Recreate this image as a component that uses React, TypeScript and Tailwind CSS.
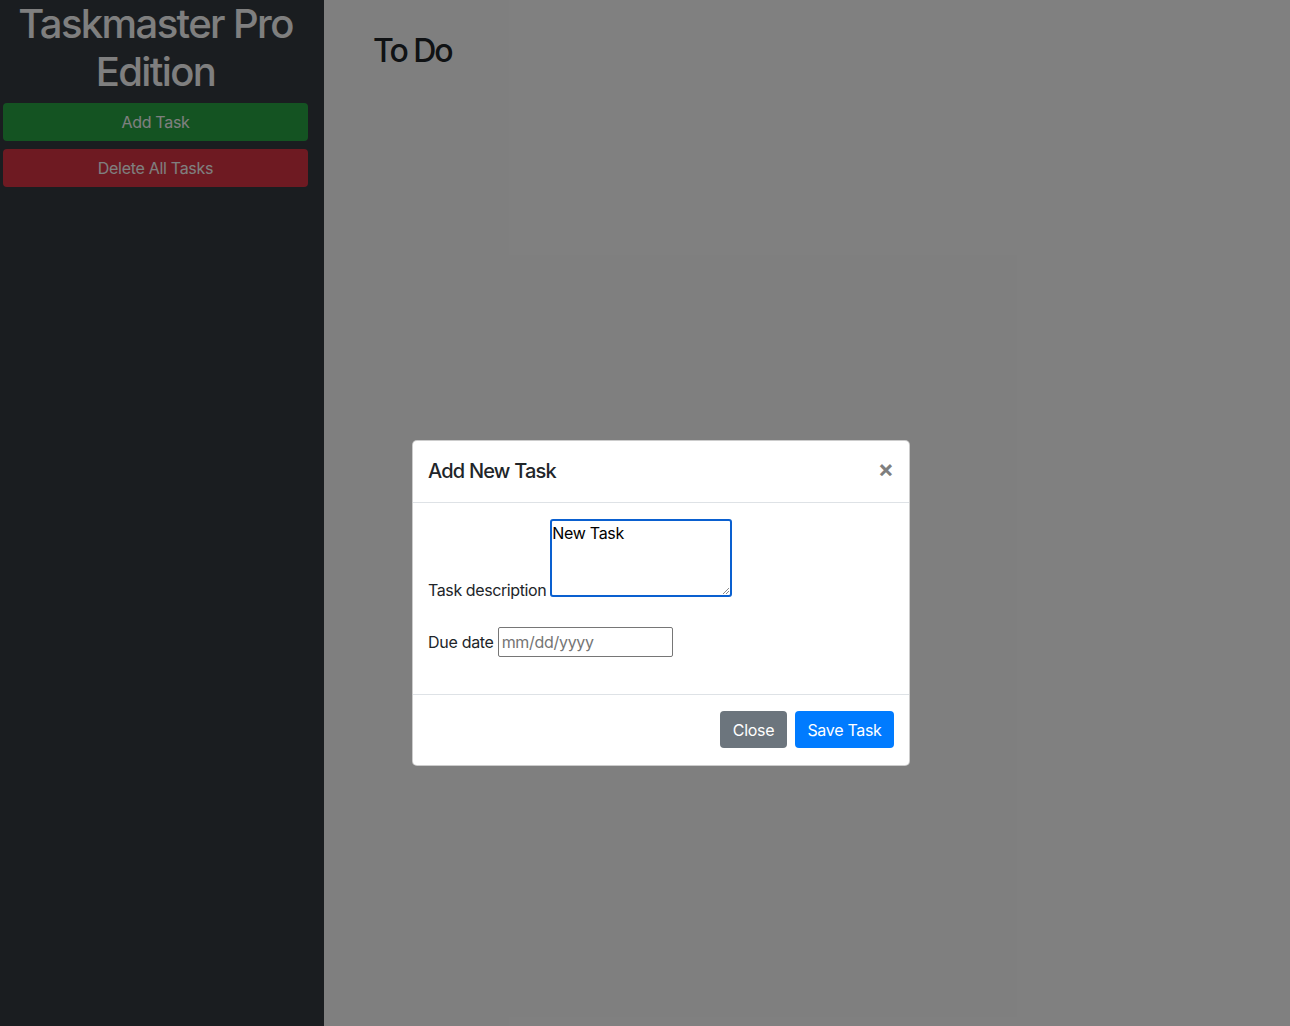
import React from 'react';

const font = { fontFamily: 'Inter, "Liberation Sans", sans-serif' };

export default function App() {
  return (
    <div className="relative h-[1026px] w-[1290px] overflow-hidden bg-white text-[#212529]" style={font}>
      <div className="flex h-full">
        <aside className="h-full w-[324px] bg-[#343a40] pl-[3px] pr-[16px]">
          <h1 className="text-center text-[40px] font-medium leading-[48px] tracking-[-1.6px] text-white">
            Taskmaster Pro Edition
          </h1>
          <div className="mt-[7px] flex flex-col gap-[8px]">
            <button className="h-[38px] w-full rounded-[4px] bg-[#28a745] text-[16px] tracking-[-0.3px] text-white">Add Task</button>
            <button className="h-[38px] w-full rounded-[4px] bg-[#dc3545] text-[16px] tracking-[-0.3px] text-white">Delete All Tasks</button>
          </div>
        </aside>
        <main className="flex-1 pl-[49px] pt-[32px]">
          <h2 className="text-[32px] font-medium leading-[38px] tracking-[-2px]">To Do</h2>
        </main>
      </div>

      <div className="absolute inset-0 bg-black/50" />

      <div className="absolute left-[412px] top-[440px] w-[498px] rounded-[5px] border border-black/20 bg-white">
        <div className="flex items-center justify-between border-b border-[#dee2e6] pl-[15px] pr-[16px] pb-[16px] pt-[15px]">
          <h5 className="text-[20px] font-medium leading-[30px] tracking-[-0.8px]">Add New Task</h5>
          <span className="-mr-[1px] -mt-[5px] text-[24px] font-bold leading-none text-black/50">×</span>
        </div>
        <div className="pl-[15px] pr-[16px] pb-[16px] pt-[16px]">
          <div className="flex items-end">
            <label className="relative top-[3px] mr-[4px] text-[16px] leading-[20px] tracking-[-0.4px]">Task description</label>
            <div className="relative h-[78px] w-[182px] rounded-[3px] border-2 border-[#0a60d0] px-0 pt-[2px] text-[16px] leading-[20px] tracking-[-0.3px] text-black">
              New Task
              <svg className="absolute bottom-[1px] right-[1px]" width="7" height="7" viewBox="0 0 7 7">
                <path d="M1 7L7 1M4 7L7 4" stroke="#8a8a8a" strokeWidth="1" />
              </svg>
            </div>
          </div>
          <div className="mt-[30px] mb-[21px] flex items-center">
            <label className="mr-[4px] text-[16px] tracking-[-0.3px]">Due date</label>
            <div className="flex h-[30px] w-[175px] items-center rounded-[2px] border border-[#767676] px-[3px] text-[16px] tracking-[-0.3px] text-[#757575]">
              mm/dd/yyyy
            </div>
          </div>
        </div>
        <div className="flex justify-end gap-[8px] border-t border-[#dee2e6] px-[15px] pb-[17px] pt-[16px]">
          <button className="h-[37px] w-[67px] rounded-[4px] bg-[#6c757d] text-[16px] tracking-[-0.3px] text-white">Close</button>
          <button className="h-[37px] w-[99px] rounded-[4px] bg-[#007bff] text-[16px] tracking-[-0.3px] text-white">Save Task</button>
        </div>
      </div>
    </div>
  );
}
